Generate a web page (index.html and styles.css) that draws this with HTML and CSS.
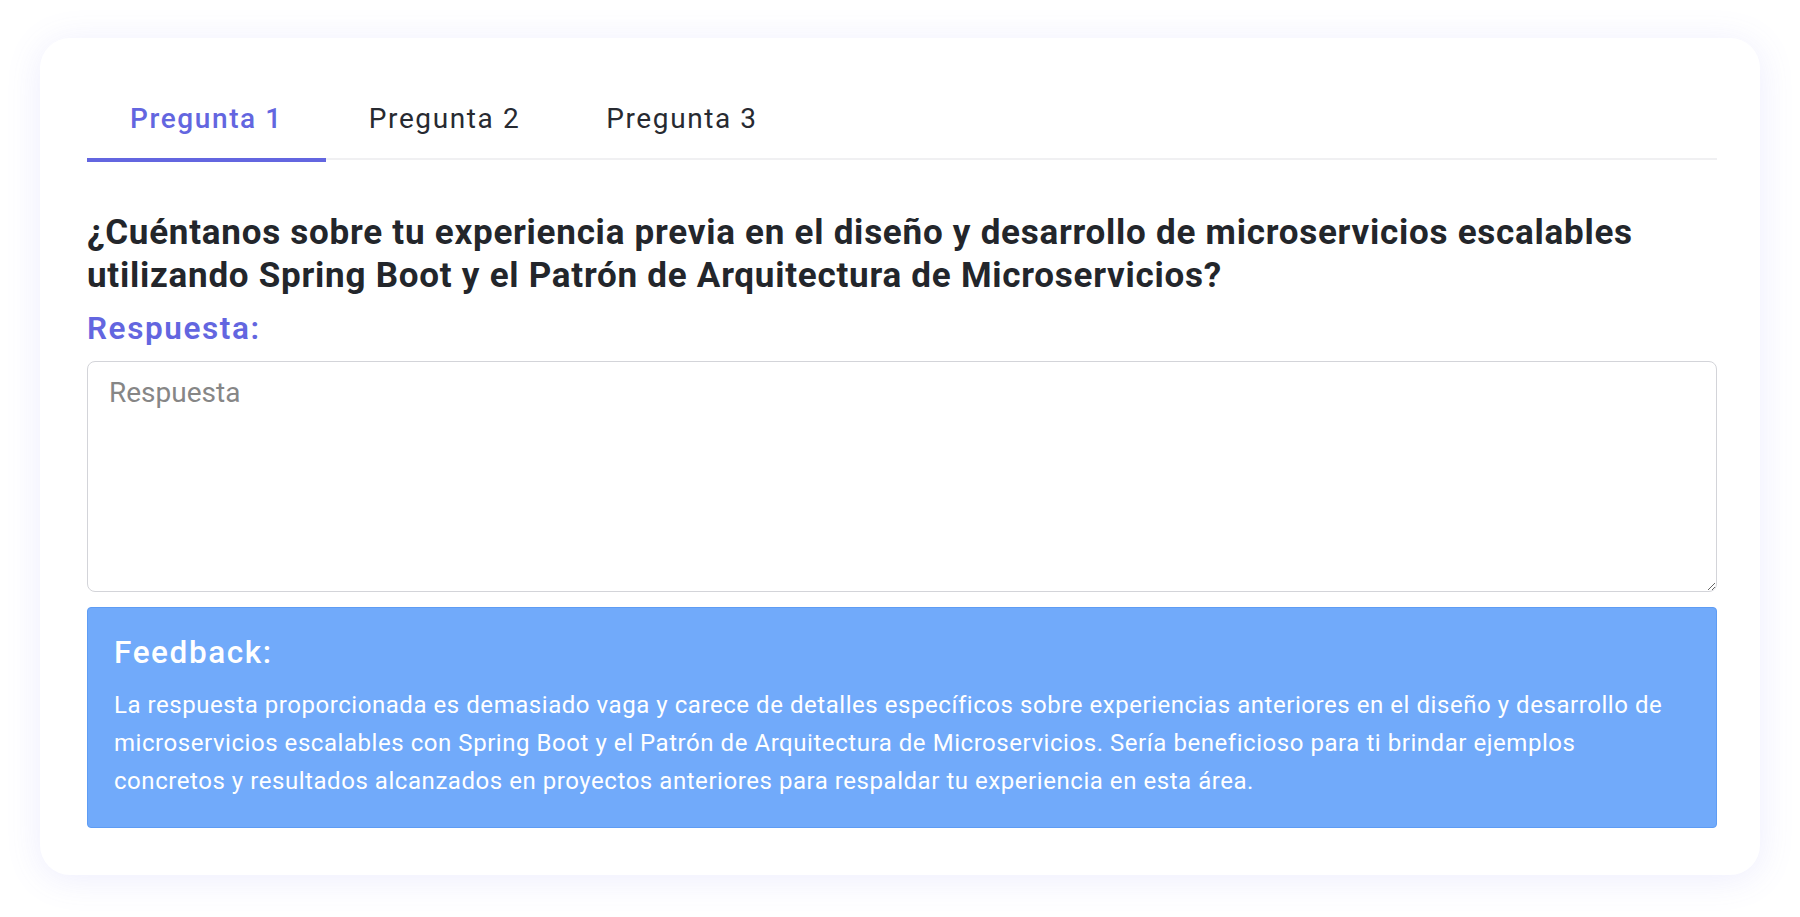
FILE: index.html
```html
<!DOCTYPE html>
<html lang="es">
<head>
<meta charset="utf-8">
<title>Preguntas</title>
<link rel="stylesheet" href="styles.css">
</head>
<body>
<main class="page">
  <section class="card">
    <nav class="tabs">
      <div class="tab tab-active">Pregunta 1</div>
      <div class="tab">Pregunta 2</div>
      <div class="tab">Pregunta 3</div>
    </nav>
    <h2 class="question">¿Cuéntanos sobre tu experiencia previa en el diseño y desarrollo de microservicios escalables utilizando Spring Boot y el Patrón de Arquitectura de Microservicios?</h2>
    <label class="answer-label" for="answer">Respuesta:</label>
    <textarea id="answer" class="answer" placeholder="Respuesta"></textarea>
    <div class="feedback">
      <h3 class="feedback-title">Feedback:</h3>
      <p class="feedback-text">La respuesta proporcionada es demasiado vaga y carece de detalles específicos sobre experiencias anteriores en el diseño y desarrollo de microservicios escalables con Spring Boot y el Patrón de Arquitectura de Microservicios. Sería beneficioso para ti brindar ejemplos concretos y resultados alcanzados en proyectos anteriores para respaldar tu experiencia en esta área.</p>
    </div>
  </section>
</main>
</body>
</html>
```

FILE: styles.css
```css
html, body {
  margin: 0;
  padding: 0;
  background: #ffffff;
  font-family: Roboto, "Liberation Sans", Arial, sans-serif;
}

.page {
  padding: 38px 40px 42px 40px;
}

.card {
  display: flex;
  flex-direction: column;
  background: #ffffff;
  border-radius: 30px;
  box-shadow: 0 4px 36px rgba(110, 110, 235, 0.12);
  padding: 38px 43px 47px 47px;
  box-sizing: border-box;
}

.tabs {
  display: flex;
  border-bottom: 2px solid #f0f0f2;
  height: 84px;
  box-sizing: border-box;
}

.tab {
  position: relative;
  display: flex;
  align-items: center;
  padding: 0 43px;
  height: 84px;
  font-size: 28px;
  letter-spacing: 1.6px;
  color: #272a31;
  font-weight: 400;
}

.tab-active {
  color: #6366e0;
  font-weight: 500;
}

.tab-active::after {
  content: "";
  position: absolute;
  left: 0;
  right: 0;
  bottom: -2px;
  height: 4px;
  background: #6366e0;
}

.question {
  margin: 52px 0 0 0;
  font-size: 35px;
  line-height: 42.5px;
  font-weight: 700;
  color: #23262b;
  letter-spacing: 0.75px;
}

.answer-label {
  margin-top: 11px;
  font-size: 31.5px;
  line-height: 42px;
  font-weight: 600;
  color: #6366e0;
  letter-spacing: 1.6px;
}

.answer {
  margin-top: 11px;
  height: 231px;
  box-sizing: border-box;
  border: 1.5px solid #d3d4d9;
  border-radius: 8px;
  padding: 10px 21px;
  font-family: Roboto, "Liberation Sans", Arial, sans-serif;
  font-size: 28px;
  line-height: 42px;
  color: #333;
  resize: vertical;
  outline: none;
}

.answer::placeholder {
  color: #868686;
}

.feedback {
  margin-top: 15px;
  background: #71aafa;
  border: 1px solid #5e9cf4;
  border-radius: 4px;
  padding: 26px 26px 27px 26px;
  color: #ffffff;
}

.feedback-title {
  margin: 0;
  font-size: 31.5px;
  line-height: 38px;
  font-weight: 500;
  letter-spacing: 1.6px;
}

.feedback-text {
  margin: 14px 0 0 0;
  font-size: 24px;
  line-height: 38px;
  letter-spacing: 0.55px;
}
```
